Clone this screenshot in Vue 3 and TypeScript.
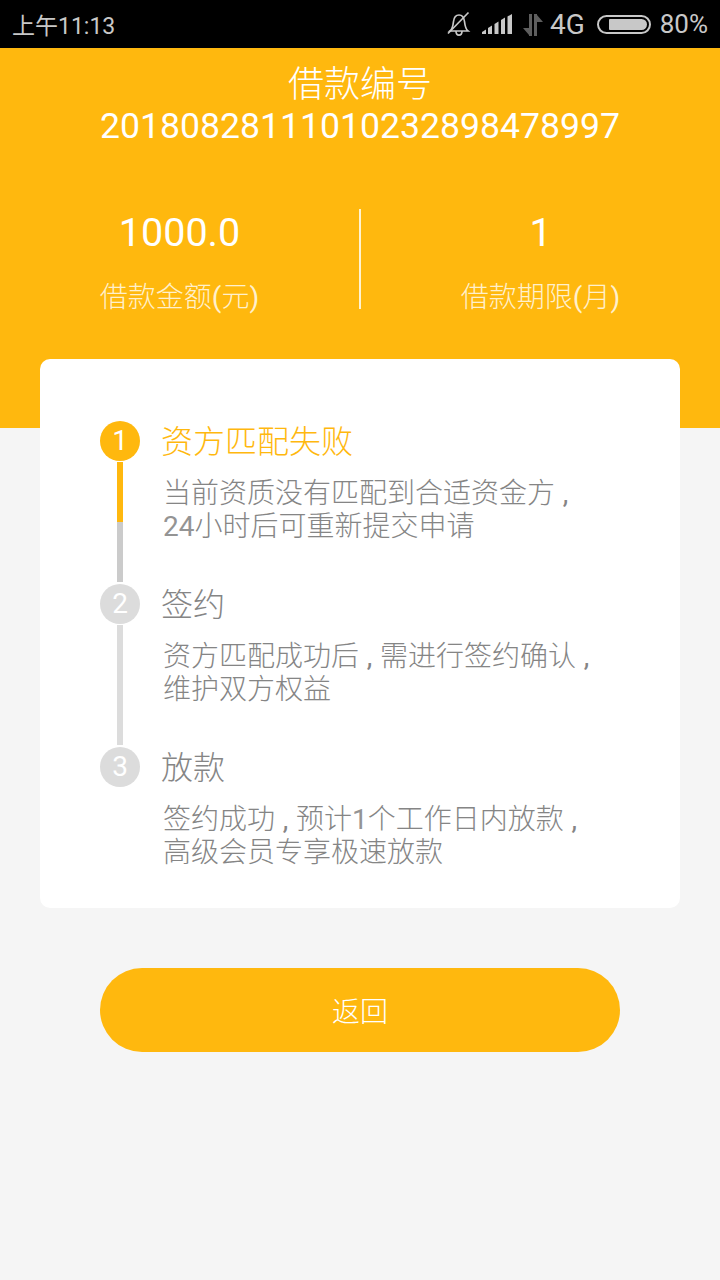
<script setup lang="ts">
interface Step { n: number; title: string; lines: string[][]; active?: boolean }
const raw = [
  { n: 1, title: '资方匹配失败', lines: ['当前资质没有匹配到合适资金方,', '24小时后可重新提交申请'], active: true },
  { n: 2, title: '签约', lines: ['资方匹配成功后,需进行签约确认,', '维护双方权益'] },
  { n: 3, title: '放款', lines: ['签约成功,预计1个工作日内放款,', '高级会员专享极速放款'] },
]
const steps: Step[] = raw.map((s) => ({ ...s, lines: s.lines.map((l) => l.split(/(,|\d+)/).filter(Boolean)) }))
</script>

<template>
  <div class="page">
    <div class="status">
      <span class="time">上午11:13</span>
      <div class="status-right">
        <svg class="bell" width="24" height="26" viewBox="0 0 24 26" fill="none" stroke="#c8c8c8" stroke-width="1.7">
          <path d="M3 20c2.500-2 3-5 3.500-9.500C7 6.500 9 4 12 4s5 2.500 5.500 6.500c.5 4.500 1 7.500 3.500 9.500z" />
          <path d="M9 20c0 5.500 6 5.500 6 0" />
          <path d="M1 22.500 21.500 1.500" />
        </svg>
        <svg class="signal" width="31" height="20" viewBox="0 0 31 20" fill="#c8c8c8">
          <path d="M0 20v-2l4-2.500V20z" />
          <path d="M6 20v-6l4-2.500V20z" />
          <path d="M12.500 20V10l4-2.500V20z" />
          <path d="M19 20V6l4-2.500V20z" />
          <path d="M25.500 20V2.500L30 0v20z" />
        </svg>
        <svg class="data" width="20" height="22" viewBox="0 0 20 22" fill="#5e5e5e">
          <path d="M6 0h3v22H6v-1L0 14h6z" />
          <path d="M11 22h3V8h6L14 1V0h-3z" />
        </svg>
        <span class="net">4G</span>
        <div class="battery"><div class="battery-fill"></div></div>
        <span class="pct">80%</span>
      </div>
    </div>

    <header class="hero">
      <div class="hero-title">借款编号</div>
      <div class="hero-number">20180828111010232898478997</div>
      <div class="stats">
        <div class="stat">
          <div class="stat-value">1000.0</div>
          <div class="stat-label">借款金额<span class="lat">(</span>元<span class="lat">)</span></div>
        </div>
        <div class="divider"></div>
        <div class="stat">
          <div class="stat-value">1</div>
          <div class="stat-label">借款期限<span class="lat">(</span>月<span class="lat">)</span></div>
        </div>
      </div>
    </header>

    <section class="card">
      <div v-for="(s, i) in steps" :key="s.n" class="step" :class="{ active: s.active }">
        <div class="rail">
          <div class="dot">{{ s.n }}</div>
          <div v-if="i < steps.length - 1" class="line"></div>
        </div>
        <div class="body">
          <div class="title">{{ s.title }}</div>
          <div class="desc">
            <div v-for="(l, li) in s.lines" :key="li">
              <template v-for="(part, pi) in l" :key="pi">
                <span v-if="part === ','" class="comma">,</span>
                <span v-else-if="/\d/.test(part)" class="digits">{{ part }}</span>
                <template v-else>{{ part }}</template>
              </template>
            </div>
          </div>
        </div>
      </div>
    </section>

    <button class="back" type="button">返回</button>
  </div>
</template>

<style>
html, body { margin: 0; background: #f5f5f5; }
</style>

<style scoped>
.page {
  width: 720px;
  height: 1280px;
  background: #f5f5f5;
  font-family: Roboto, "Noto Sans CJK SC", sans-serif;
  overflow: hidden;
}
.status {
  height: 48px;
  background: #000;
  color: #c8c8c8;
  display: flex;
  align-items: center;
  justify-content: space-between;
  padding: 0 12px;
  font-size: 26px;
}
.time { font-size: 23px; }
.status-right { display: flex; align-items: center; }
.bell { margin-right: 11px; }
.signal { margin-right: 10px; }
.data { margin-right: 7px; margin-top: 2px; }
.net { margin-right: 12px; font-size: 28px; }
.battery {
  width: 54px;
  height: 19px;
  border: 2px solid #c8c8c8;
  border-radius: 10px;
  padding: 2px 2px 2px 10px;
  margin-right: 9px;
  box-sizing: border-box;
  display: flex;
}
.battery-fill { flex: 1; background: #c8c8c8; border-radius: 1px 6px 6px 1px; }
.hero {
  height: 380px;
  background: #ffb80e;
  color: #fff;
  text-align: center;
  padding-top: 18px;
  box-sizing: border-box;
}
.hero-title { font-size: 36px; line-height: 39px; font-weight: 300; }
.hero-number { font-size: 35.600px; line-height: 42px; }
.stats { display: flex; align-items: flex-start; margin-top: 62px; height: 100px; }
.stat { flex: 1; text-align: center; }
.stat-value { font-size: 39.500px; line-height: 48px; }
.stat-label { font-size: 28px; line-height: 36px; margin-top: 23px; color: #fff0cc; font-weight: 300; }
.lat { font-weight: 400; }
.divider { width: 2px; height: 100px; background: #fff3d0; }
.card {
  width: 640px;
  height: 549px;
  margin: -69px auto 0;
  background: #fff;
  border-radius: 10px;
  padding: 62px 60px 0;
  box-sizing: border-box;
}
.step { display: flex; height: 163px; }
.rail { width: 40px; display: flex; flex-direction: column; align-items: center; }
.dot {
  width: 40px;
  height: 40px;
  border-radius: 50%;
  background: #dcdcdc;
  color: #fff;
  font-size: 28px;
  line-height: 40px;
  text-align: center;
  flex: none;
}
.active .dot { background: #ffb80e; }
.line { width: 6px; height: 120px; margin-top: 1px; background: #dcdcdc; }
.active .line { background: linear-gradient(#ffb80e 50%, #cbcbcb 50%); }
.body { margin-left: 21px; }
.title { font-size: 32px; line-height: 40px; color: #858585; margin-top: 1px; font-weight: 300; }
.active .title { color: #ffb80e; }
.desc { font-size: 28px; line-height: 33px; color: #858585; margin: 15px 0 0 2px; white-space: nowrap; font-weight: 300; }
.digits { font-weight: 400; color: #949494; }
.comma { display: inline-block; width: 21px; text-align: center; font-weight: 400; }
.back {
  display: block;
  width: 520px;
  height: 84px;
  margin: 60px auto 0;
  border: 0;
  border-radius: 42px;
  background: #ffb80e;
  color: #fff;
  font: inherit;
  font-size: 28px;
  font-weight: 300;
  padding: 0;
}
</style>
